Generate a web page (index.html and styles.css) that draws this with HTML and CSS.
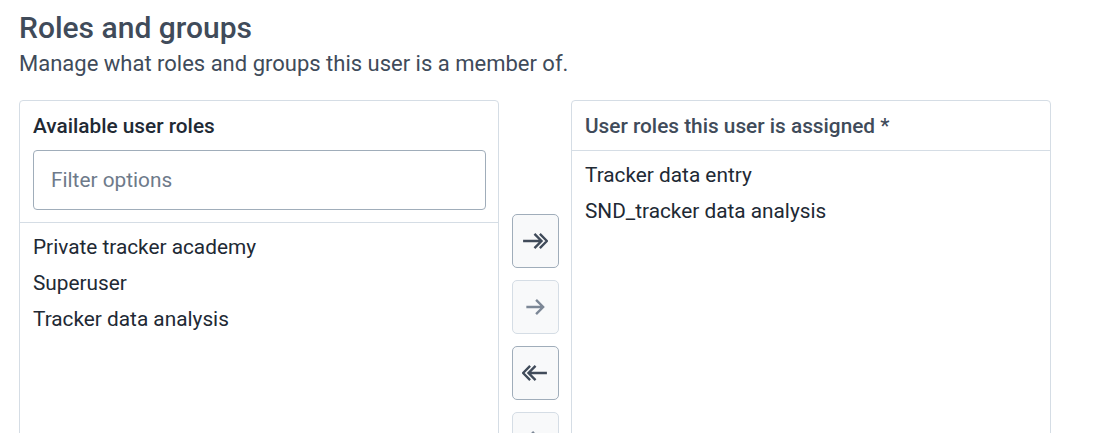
FILE: index.html
```html
<!DOCTYPE html>
<html lang="en">
<head>
<meta charset="utf-8">
<title>Roles and groups</title>
<link rel="stylesheet" href="styles.css">
</head>
<body>
<main class="page">
  <h2 class="title">Roles and groups</h2>
  <p class="subtitle">Manage what roles and groups this user is a member of.</p>
  <div class="transfer">
    <section class="panel">
      <div class="panel-head">
        <div class="panel-title panel-title-dark">Available user roles</div>
        <input class="filter" type="text" placeholder="Filter options">
      </div>
      <ul class="options">
        <li>Private tracker academy</li>
        <li>Superuser</li>
        <li>Tracker data analysis</li>
      </ul>
    </section>
    <div class="actions">
      <button class="btn" type="button" aria-label="Move all to selected">
        <svg viewBox="0 0 24 24" width="26" height="26"><path d="M1 12H17.5M11.5 5.5L18 12L11.5 18.5M16.5 5.5L23 12L16.5 18.5"/></svg>
      </button>
      <button class="btn btn-disabled" type="button" aria-label="Move to selected">
        <svg viewBox="0 0 24 24" width="26" height="26"><path d="M4 12H19.5M13 5.5L19.5 12L13 18.5"/></svg>
      </button>
      <button class="btn" type="button" aria-label="Move all to available">
        <svg viewBox="0 0 24 24" width="26" height="26"><path d="M23 12H6.5M12.5 5.5L6 12L12.5 18.5M7.5 5.5L1 12L7.5 18.5"/></svg>
      </button>
      <button class="btn btn-disabled" type="button" aria-label="Move to available">
        <svg viewBox="0 0 24 24" width="26" height="26"><path d="M20 12H4.5M11 5.5L4.5 12L11 18.5"/></svg>
      </button>
    </div>
    <section class="panel">
      <div class="panel-head">
        <div class="panel-title">User roles this user is assigned *</div>
      </div>
      <ul class="options">
        <li>Tracker data entry</li>
        <li>SND_tracker data analysis</li>
      </ul>
    </section>
  </div>
</main>
</body>
</html>
```

FILE: styles.css
```css
* { box-sizing: border-box; }

html, body {
  margin: 0;
  padding: 0;
  background: #ffffff;
}

body {
  font-family: Roboto, "Noto Sans", "Liberation Sans", sans-serif;
  color: #212934;
}

.page {
  padding: 10px 19px 0;
}

.title {
  margin: 0;
  font-size: 30px;
  font-weight: 500;
  line-height: 35px;
  color: #404b5a;
}

.subtitle {
  margin: 6px 0 0;
  font-size: 22px;
  line-height: 26px;
  color: #404b5a;
}

.transfer {
  display: flex;
  margin-top: 23px;
  align-items: flex-start;
}

.panel {
  width: 480px;
  height: 380px;
  flex: none;
  border: 1px solid #d5dde5;
  border-radius: 4px;
  background: #ffffff;
}

.panel-head {
  padding: 13px 12px 12px 13px;
  border-bottom: 1px solid #d5dde5;
}

.panel-title {
  font-size: 20.8px;
  font-weight: 500;
  line-height: 24px;
  color: #404b5a;
}

.panel-title-dark {
  color: #212934;
}

.filter {
  display: block;
  width: 100%;
  height: 60px;
  margin-top: 12px;
  padding: 0 17px;
  border: 1px solid #a0adba;
  border-radius: 4px;
  font-family: inherit;
  font-size: 20.8px;
  color: #212934;
  background: #ffffff;
  outline: none;
}

.filter::placeholder {
  color: #6e7a8a;
}

.options {
  list-style: none;
  margin: 0;
  padding: 6px 13px 0;
}

.options li {
  height: 36px;
  font-size: 20.8px;
  line-height: 36px;
  color: #212934;
}

.actions {
  flex: none;
  width: 72px;
  padding-top: 114px;
  display: flex;
  flex-direction: column;
  align-items: center;
  gap: 12px;
}

.btn {
  width: 47px;
  height: 54px;
  padding: 0;
  display: flex;
  align-items: center;
  justify-content: center;
  background: #f8f9fa;
  border: 1px solid #a0adba;
  border-radius: 5px;
  cursor: pointer;
}

.btn svg {
  fill: none;
  stroke: #404b5a;
  stroke-width: 2.2;
  stroke-linecap: butt;
  stroke-linejoin: miter;
}

.btn-disabled {
  border-color: #d5dde5;
  cursor: not-allowed;
}

.btn-disabled svg {
  stroke: #7c8796;
}
```
